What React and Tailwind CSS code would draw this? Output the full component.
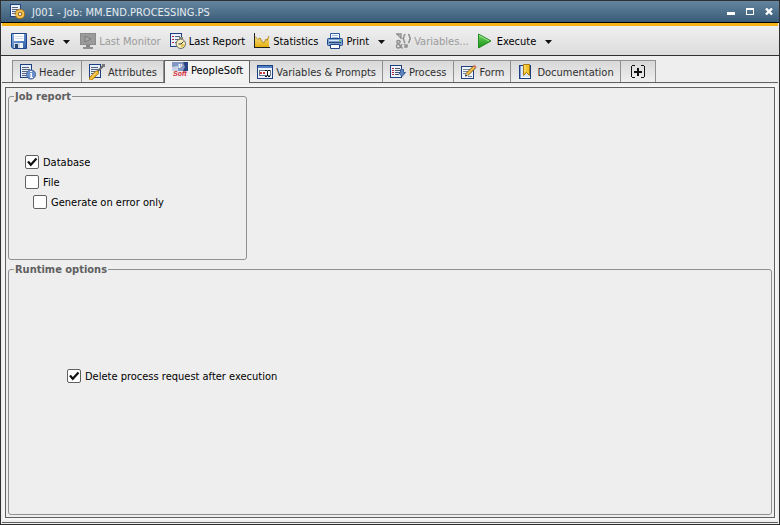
import React, { useState } from 'react';

const Icon = ({ children, className = '' }) => (
  <svg viewBox="0 0 16 16" className={`h-4 w-4 shrink-0 ${className}`} aria-hidden="true">
    {children}
  </svg>
);

// Sheet with text lines, shared by several icons
const Sheet = ({ stroke = '#1f4080' }) => (
  <g shapeRendering="crispEdges">
    <rect x="0" y="0" width="12" height="14" fill={stroke} />
    <rect x="1" y="1" width="10" height="12" fill="#e6eefb" />
    <path d="M2 3h7v1H2zM2 5h8v1H2zM2 7h6v1H2zM2 9h5v1H2zM2 11h4v1H2z" fill="#56657c" />
  </g>
);

const JobIcon = () => (
  <Icon>
    <g shapeRendering="crispEdges">
      <rect x="1" y="0" width="11" height="13" fill="#1f4080" />
      <rect x="2" y="1" width="9" height="11" fill="#e9f0fb" />
      <path d="M3 3h6v1H3zM3 5h7v1H3zM3 7h4v1H3zM3 9h3v1H3z" fill="#56657c" />
    </g>
    <circle cx="11" cy="10" r="4.6" fill="#e8a92c" stroke="#a8700f" strokeWidth="1.4" strokeDasharray="2 1.4" />
    <circle cx="11" cy="10" r="4" fill="#f3c452" />
    <circle cx="11" cy="10" r="1.8" fill="#e9eef4" stroke="#94621a" />
  </Icon>
);

const SaveIcon = () => (
  <Icon>
    <defs>
      <linearGradient id="disk" x1="0" y1="0" x2="1" y2="1">
        <stop offset="0" stopColor="#8db4e6" />
        <stop offset="1" stopColor="#2d5da8" />
      </linearGradient>
    </defs>
    <path d="M.5.5h15v15H2L.5 14z" fill="url(#disk)" stroke="#1f4686" />
    <g shapeRendering="crispEdges">
      <rect x="3" y="1" width="10" height="7" fill="#fff" />
      <rect x="4" y="3" width="8" height="1" fill="#d5dae2" />
      <rect x="4" y="5" width="8" height="1" fill="#d5dae2" />
      <rect x="3" y="10" width="9" height="5" fill="#cfd8e6" />
      <rect x="4" y="11" width="3" height="4" fill="#28456f" />
      <rect x="9" y="10" width="3" height="5" fill="#f4f6fa" />
    </g>
  </Icon>
);

const MonitorIcon = () => (
  <Icon>
    <g shapeRendering="crispEdges">
      <rect x="0" y="0" width="16" height="12" fill="#8b8b8b" />
      <rect x="1" y="1" width="14" height="10" fill="#9b9b9b" />
      <rect x="6" y="12" width="4" height="2" fill="#858585" />
      <rect x="3" y="14" width="10" height="2" fill="#8f8f8f" />
    </g>
    <path d="M5 3l6 3-6 3z" fill="#a8a8a8" stroke="#777" strokeWidth="0.9" />
  </Icon>
);

const ReportIcon = () => (
  <Icon>
    <g shapeRendering="crispEdges">
      <rect x="0" y="0" width="12" height="14" fill="#1f4080" />
      <rect x="1" y="1" width="10" height="12" fill="#e9f0fb" />
      <path d="M2 3h2v1H2zM2 6h2v1H2zM2 9h2v1H2z" fill="#b2263a" />
      <path d="M5 3h5v1H5zM5 6h5v1H5zM5 9h2v1H5z" fill="#56657c" />
    </g>
    <path d="M9 4h4v2H9z" fill="#8b8b7a" />
    <circle cx="10.800" cy="10.800" r="4.700" fill="#f6eebb" stroke="#6b6c61" />
    <path d="M11 11v3.600A3.800 3.800 0 0 0 14.600 11z" fill="#e1c45a" />
    <path d="M11 11l2.500-2.500M11 11H8.500" stroke="#333" fill="none" />
  </Icon>
);

const StatisticsIcon = () => (
  <Icon>
    <defs>
      <linearGradient id="gold" x1="0" y1="0" x2="0" y2="1">
        <stop offset="0" stopColor="#f8df8a" />
        <stop offset="1" stopColor="#e3b10d" />
      </linearGradient>
    </defs>
    <path d="M1 14V4l3 3 2-2 2 3 2 2 2-4 1 2 2-5v11z" fill="url(#gold)" />
    <path d="M1 3.500l3 3 2-1.500 2 3.500 2 1.500 2-4 1 1.500 2-4.500" fill="none" stroke="#b98a1b" />
    <path d="M0 0h1v14h15v1H0z" fill="#222" shapeRendering="crispEdges" />
  </Icon>
);

const PrintIcon = () => (
  <Icon>
    <path d="M3.5.5h9v6h-9z" fill="#f5f9ff" stroke="#315f9f" />
    <path d="M5 2.5h6M5 4.5h6" stroke="#abc0dc" />
    <rect x="0.5" y="5.5" width="15" height="7" rx="1" fill="#7fa3d5" stroke="#1f4686" />
    <path d="M2 7.5h12" stroke="#d7e5f8" />
    <path d="M2 9.5h12" stroke="#29466f" />
    <path d="M3.5 11.5h9v4h-9z" fill="#fff" stroke="#1f4686" />
    <rect x="12" y="7" width="2" height="1" fill="#6bd54e" />
  </Icon>
);

const VariablesIcon = () => (
  <Icon>
    <g fill="none" stroke="#8e8e8e" strokeWidth="1.400">
      <path d="M1 1h5v5M6 5L2 1" />
      <path d="M10.500 1.500Q9 1.500 9 3v1L8 5.500 9 7v1q0 1.500 1.500 1.500M13 1.500q1.500 0 1.500 1.500v1l1 1.500-1 1.500v1q0 1.500-1.500 1.500" />
      <path d="M7.500 15.500L2 9.500q-.5-2 1.500-2t1.500 2L2 11.500q-1.500 3 1 3.500 2.500 0 4-4" />
      <path d="M9 11l3 3M12 11v3H9" />
    </g>
  </Icon>
);

const ExecuteIcon = () => (
  <Icon>
    <defs>
      <linearGradient id="play" x1="0" y1="0" x2="0" y2="1">
        <stop offset="0" stopColor="#72d562" />
        <stop offset="1" stopColor="#149414" />
      </linearGradient>
    </defs>
    <path d="M.5 1v14L13 8z" fill="url(#play)" stroke="#218a21" />
    <path d="M1 2.500L11 8" stroke="#a2e895" />
  </Icon>
);

const HeaderIcon = () => (
  <Icon>
    <Sheet />
    <circle cx="11" cy="10.500" r="4.500" fill="#6c92cf" stroke="#3e609b" />
    <path d="M10 9h2v4h1v1h-3v-1h.5v-3H10zM10 7h2v1h-2z" fill="#fff" />
  </Icon>
);

const AttributesIcon = () => (
  <Icon>
    <Sheet />
    <path d="M15 1L8 8" stroke="#6a6a6a" strokeWidth="2" />
    <path d="M13 0h3v3h-1l-2-1z" fill="#777" />
    <path d="M8 8.500L2 14.500" stroke="#a66f10" strokeWidth="4" strokeLinecap="round" />
    <path d="M8 8.500L2 14.500" stroke="#f3bd2e" strokeWidth="2.500" strokeLinecap="round" />
    <path d="M7 8.500l-4 4" stroke="#fbe6a0" />
  </Icon>
);

const PeopleSoftIcon = () => (
  <Icon>
    <path d="M0 0h16v9H0z" fill="#8496c2" />
    <path d="M11 0h5v9h-5l2-4z" fill="#274383" />
    <path d="M0 5l6-1v5H0z" fill="#c9d1e4" />
    <path d="M0 9h16v7H0z" fill="#f4f0f1" />
    <text x="6" y="6" fill="#fff" fontSize="7" fontWeight="bold" fontFamily="Liberation Serif, serif">P</text>
    <text x="1" y="14" fill="#d21f2f" fontSize="7" fontWeight="bold" fontStyle="italic" fontFamily="Liberation Sans, sans-serif">Soft</text>
  </Icon>
);

const PromptsIcon = () => (
  <Icon>
    <g shapeRendering="crispEdges">
      <rect x="0" y="1" width="16" height="14" fill="#1f4080" />
      <rect x="1" y="2" width="14" height="2" fill="#4e7fc7" />
      <rect x="1" y="4" width="14" height="10" fill="#edf3fc" />
      <rect x="2" y="6" width="12" height="6" fill="#65758e" />
      <rect x="3" y="7" width="10" height="4" fill="#fff" />
      <path d="M3 8h2v2H3zM6 8h2v2H6z" fill="#cc3b35" />
      <path d="M8 6h2v1H8zM11 6h2v1h-2zM10 7h1v5h-1zM8 12h2v1H8zM11 12h2v1h-2z" fill="#111" />
    </g>
  </Icon>
);

const ProcessIcon = () => (
  <Icon>
    <g shapeRendering="crispEdges">
      <rect x="0" y="1" width="12" height="13" fill="#1f4080" />
      <rect x="1" y="2" width="10" height="11" fill="#f0f4fb" />
      <path d="M2 4h2v1H2zM2 6h2v1H2zM2 8h2v1H2zM2 10h2v1H2z" fill="#b2263a" />
      <path d="M5 4h5v1H5zM5 6h5v1H5zM5 8h4v1H5zM5 10h4v1H5z" fill="#46536a" />
    </g>
    <path d="M10.500 5.500h3v3h2l-3.500 4-3.500-4h2z" fill="#6186bd" stroke="#345b99" />
  </Icon>
);

const FormIcon = () => (
  <Icon>
    <g shapeRendering="crispEdges">
      <rect x="0" y="2" width="13" height="13" fill="#1f4080" />
      <rect x="1" y="3" width="11" height="11" fill="#f0f4fb" />
      <path d="M2 5h7v1H2zM2 7h5v1H2zM2 9h3v1H2zM7 12h4v1H7z" fill="#78869b" />
    </g>
    <path d="M14 2.500L6 10.500" stroke="#7d5a16" strokeWidth="3.600" />
    <path d="M13.500 3L6 10.500" stroke="#f2c04a" strokeWidth="2.200" />
    <path d="M13 1.500l2 2" stroke="#d47770" strokeWidth="2" />
    <path d="M4 12.500l.5-2.500 2 2z" fill="#222" />
  </Icon>
);

const DocumentationIcon = () => (
  <Icon>
    <g shapeRendering="crispEdges">
      <rect x="1" y="1" width="12" height="14" fill="#1f4080" />
      <rect x="3" y="2" width="9" height="11" fill="#dce7f8" />
      <rect x="2" y="2" width="1" height="12" fill="#7da0d6" />
      <rect x="3" y="13" width="9" height="1" fill="#fff" />
    </g>
    <path d="M5.500.5h6v11l-3-3-3 3z" fill="#f2c22b" stroke="#a97912" />
    <path d="M7 1v7" stroke="#fbe893" />
  </Icon>
);

const AddIcon = () => (
  <Icon>
    <g shapeRendering="crispEdges" fill="#111">
      <path d="M2 1h3v1H2zM1 2h1v11H1zM2 13h3v1H2zM11 1h3v1h-3zM14 2h1v11h-1zM11 13h3v1h-3z" />
      <path d="M7 4h2v8H7zM4 7h8v2H4z" />
    </g>
  </Icon>
);

const ToolButton = ({ icon, label, disabled }) => (
  <button
    type="button"
    disabled={disabled}
    className="flex items-center gap-[3px] text-black disabled:text-[#9a9a9a]"
  >
    {icon}
    <span className="pt-[2px]">{label}</span>
  </button>
);

const MenuArrow = ({ label }) => (
  <button type="button" aria-label={label} className="flex h-4 w-2 items-center pt-[2px]">
    <svg viewBox="0 0 8 4" className="h-1 w-2" aria-hidden="true">
      <path d="M0 0h7L3.500 4z" fill="#111" />
    </svg>
  </button>
);

const CheckBox = ({ label, defaultChecked, className = '' }) => (
  <label className={`flex h-5 w-fit items-center gap-1 ${className}`}>
    <span className="relative h-[14px] w-[14px]">
      <input
        type="checkbox"
        defaultChecked={defaultChecked}
        className="peer block h-[14px] w-[14px] appearance-none rounded-[2px] border border-[#606060] bg-white"
      />
      <svg
        viewBox="0 0 14 14"
        className="pointer-events-none absolute inset-0 hidden h-[14px] w-[14px] peer-checked:block"
        aria-hidden="true"
      >
        <path d="M3 6.500L5.800 9.800 11.500 3.500" fill="none" stroke="#111" strokeWidth="2.200" />
      </svg>
    </span>
    <span className="pt-[2px]">{label}</span>
  </label>
);

const Group = ({ title, className = '', children }) => (
  <fieldset className={`min-w-0 rounded-[3px] border border-[#909090] ${className}`}>
    <legend className="ml-[5px] px-px pt-[2px] text-[11px] leading-3 font-bold text-[#606060]">{title}</legend>
    {children}
  </fieldset>
);

const tabs = [
  { name: 'Header', icon: <HeaderIcon /> },
  { name: 'Attributes', icon: <AttributesIcon /> },
  { name: 'PeopleSoft', icon: <PeopleSoftIcon /> },
  { name: 'Variables & Prompts', icon: <PromptsIcon /> },
  { name: 'Process', icon: <ProcessIcon /> },
  { name: 'Form', icon: <FormIcon /> },
  { name: 'Documentation', icon: <DocumentationIcon /> },
];

const TitleBar = () => (
  <header className="flex h-[22px] items-center border-b border-black bg-linear-to-b from-[#65869f] to-[#3a5c78] pr-[6px] pl-2 text-[#e4ebf1]">
    <JobIcon />
    <h1 className="ml-[7px] flex-1 pt-[2px]">J001 - Job: MM.END.PROCESSING.PS</h1>
    <div className="flex gap-[11px]">
      <button type="button" aria-label="Minimize">
        <svg viewBox="0 0 8 8" className="h-2 w-2" aria-hidden="true">
          <path d="M0 4h8v3H0z" fill="#fff" />
        </svg>
      </button>
      <button type="button" aria-label="Maximize">
        <svg viewBox="0 0 8 8" className="h-2 w-2" aria-hidden="true" shapeRendering="crispEdges">
          <path d="M0 0h8v7H0zM1 2v4h6V2z" fill="#fff" fillRule="evenodd" />
        </svg>
      </button>
      <button type="button" aria-label="Close">
        <svg viewBox="0 0 8 8" className="h-2 w-2" aria-hidden="true">
          <path d="M1 .5l6 6M7 .5l-6 6" stroke="#fff" strokeWidth="2.400" />
        </svg>
      </button>
    </div>
  </header>
);

const Toolbar = () => (
  <div className="flex h-[30px] items-center gap-[9px] border-b border-[#303030] bg-linear-to-b from-[#f0f0f0] to-[#dcdcdc] px-[10px]">
    <ToolButton icon={<SaveIcon />} label="Save" />
    <MenuArrow label="Save options" />
    <ToolButton icon={<MonitorIcon />} label="Last Monitor" disabled />
    <ToolButton icon={<ReportIcon />} label="Last Report" />
    <ToolButton icon={<StatisticsIcon />} label="Statistics" />
    <ToolButton icon={<PrintIcon />} label="Print" />
    <MenuArrow label="Print options" />
    <ToolButton icon={<VariablesIcon />} label="Variables..." disabled />
    <ToolButton icon={<ExecuteIcon />} label="Execute" />
    <MenuArrow label="Execute options" />
  </div>
);

const App = () => {
  const [active, setActive] = useState('PeopleSoft');

  return (
    <div className="flex min-h-screen flex-col border border-[#303030] bg-[#eeeeee] font-['DejaVu_Sans_Condensed','DejaVu_Sans',sans-serif] text-[11px] leading-[14px] whitespace-nowrap text-black">
      <TitleBar />
      <div className="mx-px h-[3px] bg-[#f5b315]" />
      <Toolbar />

      <div role="tablist" className="mx-px mt-1 flex h-[23px] border-b border-[#606060] pl-[10px]">
        {tabs.map((tab) => (
          <button
            key={tab.name}
            type="button"
            role="tab"
            aria-selected={tab.name === active}
            onClick={() => setActive(tab.name)}
            className={
              tab.name === active
                ? '-mb-px flex items-center gap-[3px] border-x border-t border-[#606060] bg-[#f2f2f2] pr-[6px] pb-1 pl-[7px] text-black'
                : 'flex items-center gap-[3px] border-t border-r border-[#909090] bg-linear-to-b from-[#d8d8d8] to-[#efefef] pr-[6px] pl-[7px] text-[#303030] first:border-l'
            }
          >
            {tab.icon}
            <span className="pt-[2px]">{tab.name}</span>
          </button>
        ))}
        <button
          type="button"
          aria-label="Add tab"
          className="flex items-center border-t border-r border-[#909090] bg-linear-to-b from-[#d8d8d8] to-[#efefef] px-[9px]"
        >
          <AddIcon />
        </button>
      </div>

      <main className="mx-1 mt-1 mb-1 flex flex-1 flex-col gap-[2px] border border-[#606060] px-[2px] pt-px pb-[2px] outline-2 outline-[#f6f6f6]">
        <Group title="Job report" className="h-[171px] w-[239px]">
          <div className="pt-[49px] pl-4">
            <CheckBox label="Database" defaultChecked />
            <CheckBox label="File" />
            <CheckBox label="Generate on error only" className="ml-2" />
          </div>
        </Group>
        <Group title="Runtime options" className="flex-1">
          <div className="pt-[90px] pl-[58px]">
            <CheckBox label="Delete process request after execution" defaultChecked />
          </div>
        </Group>
      </main>
      <div className="mx-px mb-px border-t border-[#606060]" />
    </div>
  );
};

export default App;
